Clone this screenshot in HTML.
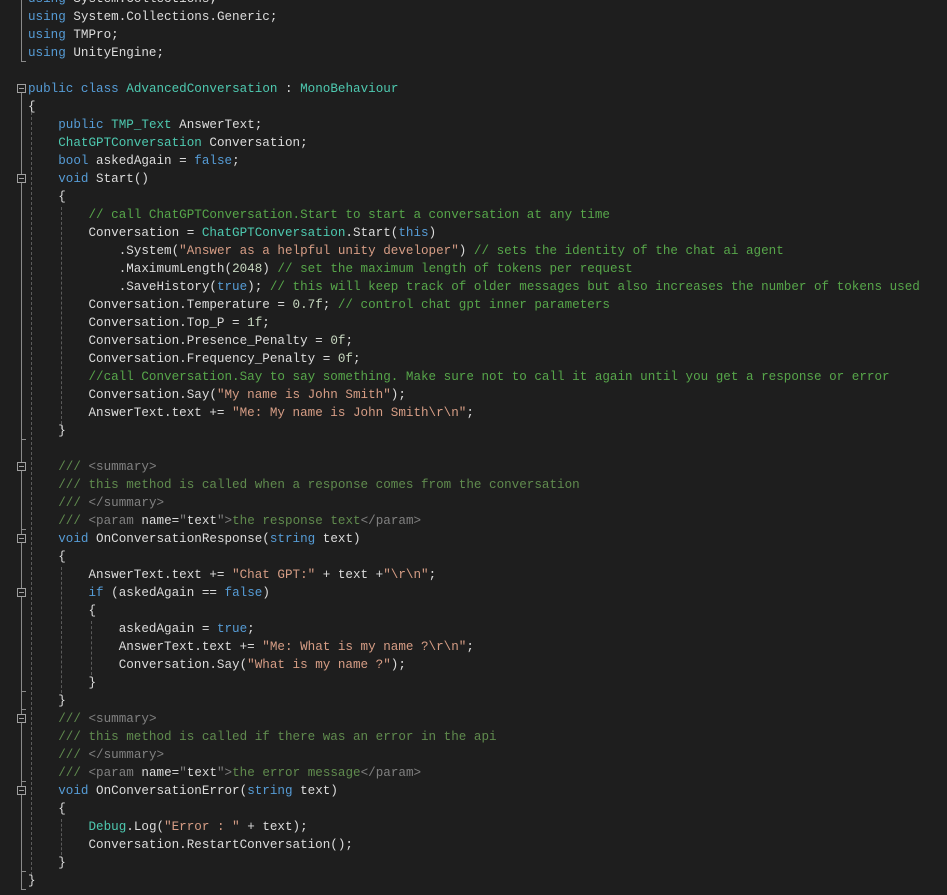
<!DOCTYPE html>
<html><head><meta charset="utf-8"><style>
html,body{margin:0;padding:0;background:#1e1e1e;width:947px;height:895px;overflow:hidden;position:relative}
pre{position:absolute;left:28px;top:-10px;margin:0;font-family:"Liberation Mono",monospace;font-size:12.6px;line-height:18px;color:#dcdcdc;letter-spacing:0}
.k{color:#569cd6}.t{color:#4ec9b0}.s{color:#d69d85}.c{color:#57a64a}.x{color:#608b4e}.g{color:#808080}.n{color:#c8d8c0}
.fb{position:absolute;width:9px;height:9px;border:1px solid #a0a0a0;box-sizing:border-box;left:17px;background:#1e1e1e}
.fb:after{content:"";position:absolute;left:1px;top:3px;width:5px;height:1px;background:#a0a0a0}
.vl{position:absolute;left:21px;width:1px;background:#8a8a8a}
.hl{position:absolute;left:21px;width:5px;height:1px;background:#8a8a8a}
.dg{position:absolute;width:0;border-left:1px dashed #5a5a5a}
</style></head><body>
<div class="vl" style="top:0;height:61px"></div><div class="hl" style="top:61px"></div>
<div class="fb" style="top:84px"></div><div class="vl" style="top:93px;height:796px"></div><div class="hl" style="top:889px"></div>
<div class="fb" style="top:174px"></div><div class="hl" style="top:439px"></div>
<div class="fb" style="top:462px"></div><div class="hl" style="top:529px"></div>
<div class="fb" style="top:534px"></div><div class="hl" style="top:709px"></div>
<div class="fb" style="top:588px"></div><div class="hl" style="top:691px"></div>
<div class="fb" style="top:714px"></div><div class="hl" style="top:781px"></div>
<div class="fb" style="top:786px"></div><div class="hl" style="top:871px"></div>
<div class="dg" style="left:31px;top:107px;height:768px"></div>
<div class="dg" style="left:61px;top:207px;height:222px"></div>
<div class="dg" style="left:61px;top:567px;height:126px"></div>
<div class="dg" style="left:91px;top:621px;height:54px"></div>
<div class="dg" style="left:61px;top:819px;height:36px"></div>
<pre><span class="k">using</span> System.Collections;
<span class="k">using</span> System.Collections.Generic;
<span class="k">using</span> TMPro;
<span class="k">using</span> UnityEngine;

<span class="k">public</span> <span class="k">class</span> <span class="t">AdvancedConversation</span> : <span class="t">MonoBehaviour</span>
{
    <span class="k">public</span> <span class="t">TMP_Text</span> AnswerText;
    <span class="t">ChatGPTConversation</span> Conversation;
    <span class="k">bool</span> askedAgain = <span class="k">false</span>;
    <span class="k">void</span> Start()
    {
        <span class="c">// call ChatGPTConversation.Start to start a conversation at any time</span>
        Conversation = <span class="t">ChatGPTConversation</span>.Start(<span class="k">this</span>)
            .System(<span class="s">"Answer as a helpful unity developer"</span>) <span class="c">// sets the identity of the chat ai agent</span>
            .MaximumLength(<span class="n">2048</span>) <span class="c">// set the maximum length of tokens per request</span>
            .SaveHistory(<span class="k">true</span>); <span class="c">// this will keep track of older messages but also increases the number of tokens used</span>
        Conversation.Temperature = <span class="n">0.7f</span>; <span class="c">// control chat gpt inner parameters</span>
        Conversation.Top_P = <span class="n">1f</span>;
        Conversation.Presence_Penalty = <span class="n">0f</span>;
        Conversation.Frequency_Penalty = <span class="n">0f</span>;
        <span class="c">//call Conversation.Say to say something. Make sure not to call it again until you get a response or error</span>
        Conversation.Say(<span class="s">"My name is John Smith"</span>);
        AnswerText.text += <span class="s">"Me: My name is John Smith\r\n"</span>;
    }

    <span class="x">///</span> <span class="g">&lt;summary&gt;</span>
    <span class="x">/// this method is called when a response comes from the conversation</span>
    <span class="x">///</span> <span class="g">&lt;/summary&gt;</span>
    <span class="x">///</span> <span class="g">&lt;param</span> name=<span class="g">"</span>text<span class="g">"&gt;</span><span class="x">the response text</span><span class="g">&lt;/param&gt;</span>
    <span class="k">void</span> OnConversationResponse(<span class="k">string</span> text)
    {
        AnswerText.text += <span class="s">"Chat GPT:"</span> + text +<span class="s">"\r\n"</span>;
        <span class="k">if</span> (askedAgain == <span class="k">false</span>)
        {
            askedAgain = <span class="k">true</span>;
            AnswerText.text += <span class="s">"Me: What is my name ?\r\n"</span>;
            Conversation.Say(<span class="s">"What is my name ?"</span>);
        }
    }
    <span class="x">///</span> <span class="g">&lt;summary&gt;</span>
    <span class="x">/// this method is called if there was an error in the api</span>
    <span class="x">///</span> <span class="g">&lt;/summary&gt;</span>
    <span class="x">///</span> <span class="g">&lt;param</span> name=<span class="g">"</span>text<span class="g">"&gt;</span><span class="x">the error message</span><span class="g">&lt;/param&gt;</span>
    <span class="k">void</span> OnConversationError(<span class="k">string</span> text)
    {
        <span class="t">Debug</span>.Log(<span class="s">"Error : "</span> + text);
        Conversation.RestartConversation();
    }
}</pre>
</body></html>
